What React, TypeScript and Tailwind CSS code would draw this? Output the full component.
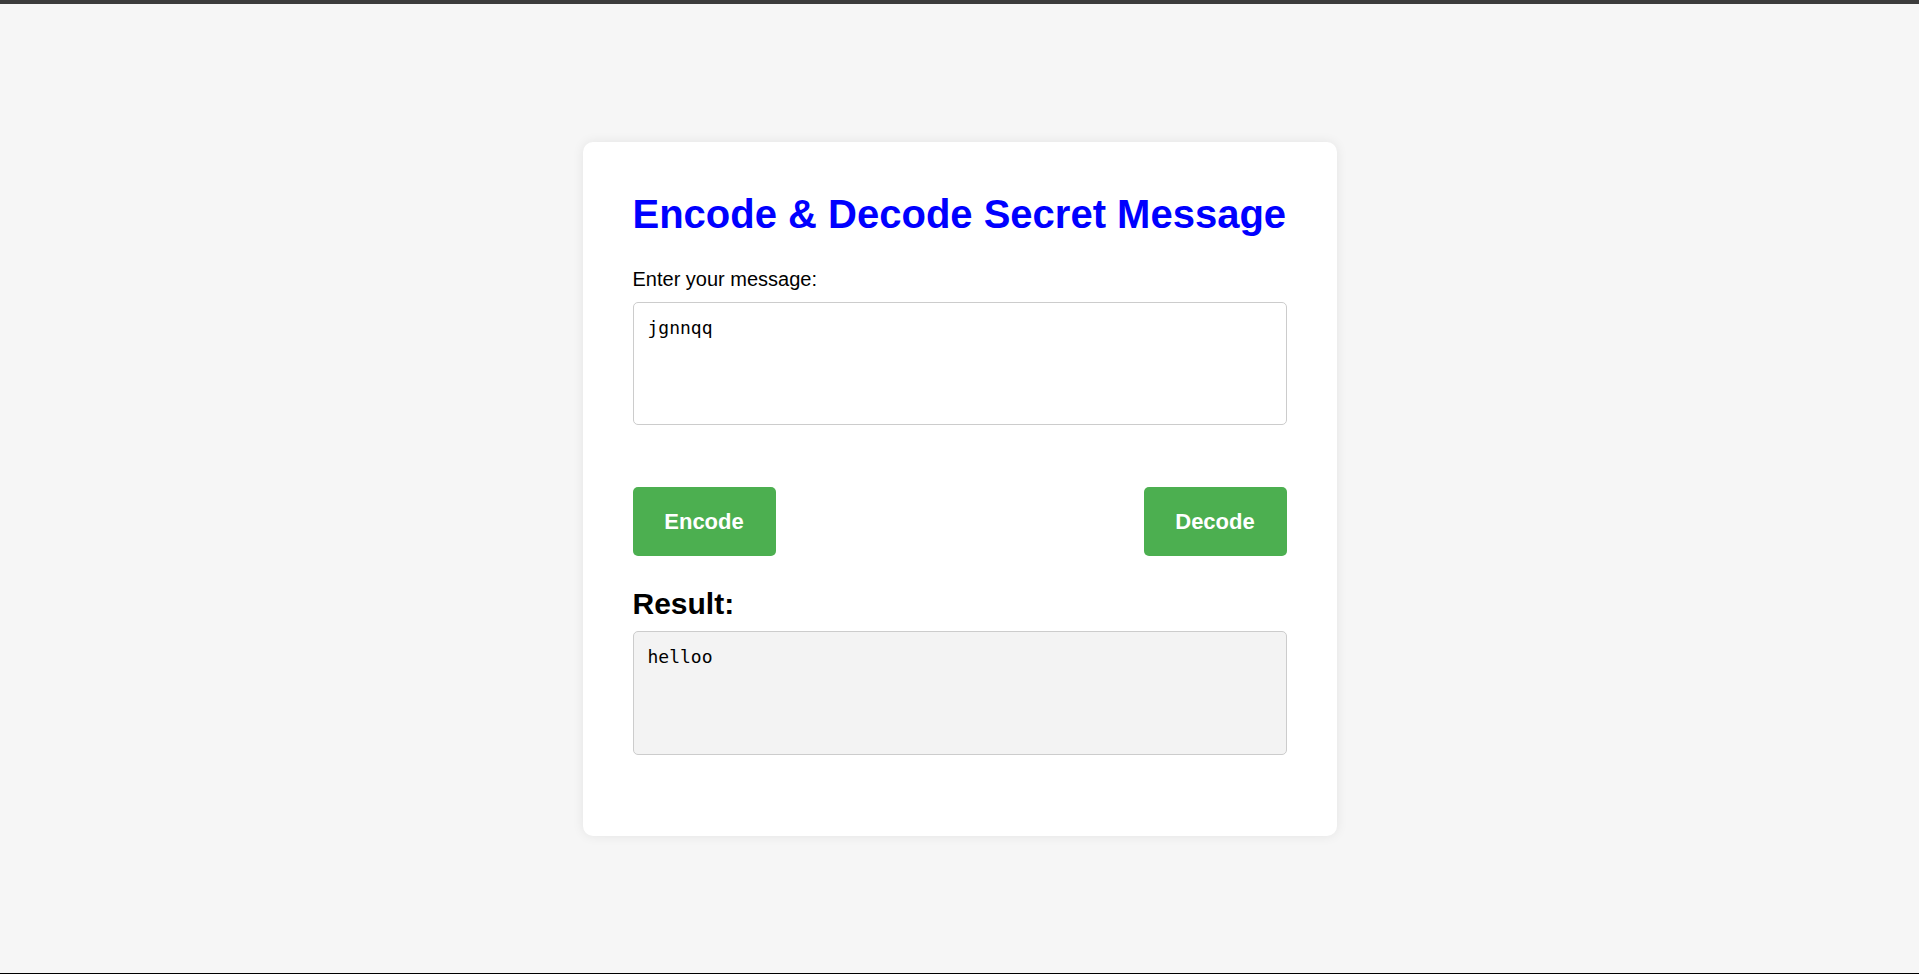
import { useState } from "react";

// shift each letter by n places (caesar style)
function shift(text: string, n: number) {
  return text.replace(/[a-z]/gi, (ch) => {
    const base = ch <= "Z" ? 65 : 97;
    return String.fromCharCode(((ch.charCodeAt(0) - base + n + 26) % 26) + base);
  });
}

export default function App() {
  const [message, setMessage] = useState("jgnnqq");
  const [result, setResult] = useState("helloo");

  return (
    <div className="h-screen flex flex-col bg-[#f6f6f6] font-['Liberation_Sans',Arial,sans-serif]">
      <div className="h-[4px] bg-[#3c3c3c]" />

      <div className="flex-1 flex items-center justify-center">
        <div className="w-[754px] bg-white rounded-[10px] shadow-[0_0_12px_rgba(0,0,0,0.08)] px-[50px] pt-[52px] pb-[81px]">
          <h1 className="text-[40px] leading-[40px] font-bold text-[#0000ff]">
            Encode &amp; Decode Secret Message
          </h1>

          <label className="block mt-[33px] text-[20px] leading-[24px] text-black">
            Enter your message:
          </label>
          <textarea
            value={message}
            onChange={(e) => setMessage(e.target.value)}
            className="block mt-[11px] w-full h-[123px] resize-none border border-[#cccccc] rounded-[5px] bg-white p-[14px] font-['DejaVu_Sans_Mono',monospace] text-[18px] leading-[22px] text-black outline-none"
          />

          {/* Buttons */}
          <div className="flex justify-between mt-[62px]">
            <button
              onClick={() => setResult(shift(message, 2))}
              className="w-[143px] h-[69px] bg-[#4caf50] rounded-[5px] text-white font-bold text-[22px]"
            >
              Encode
            </button>
            <button
              onClick={() => setResult(shift(message, -2))}
              className="w-[143px] h-[69px] bg-[#4caf50] rounded-[5px] text-white font-bold text-[22px]"
            >
              Decode
            </button>
          </div>

          <h2 className="mt-[32px] text-[30px] leading-[32px] font-bold text-black">Result:</h2>
          <textarea
            readOnly
            value={result}
            className="block mt-[11px] w-full h-[124px] resize-none border border-[#cccccc] rounded-[5px] bg-[#f3f3f3] p-[14px] font-['DejaVu_Sans_Mono',monospace] text-[18px] leading-[22px] text-black outline-none"
          />
        </div>
      </div>

      <div className="h-px bg-black" />
    </div>
  );
}
